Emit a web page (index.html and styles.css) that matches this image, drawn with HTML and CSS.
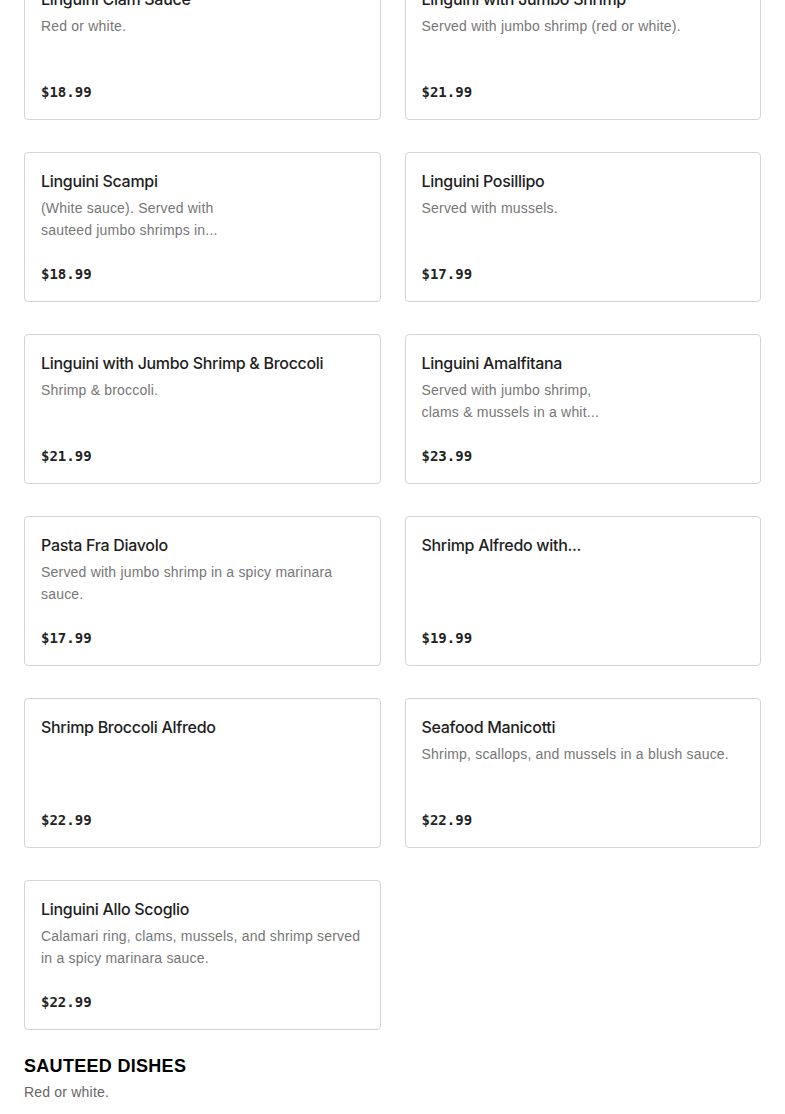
FILE: index.html
```html
<!DOCTYPE html>
<html lang="en">
<head>
<meta charset="utf-8">
<title>Menu</title>
<link rel="stylesheet" href="styles.css">
</head>
<body>
<main class="page">
  <section class="grid">
    <article class="card">
      <h3 class="title">Linguini Clam Sauce</h3>
      <p class="desc">Red or white.</p>
      <div class="price">$18.99</div>
    </article>
    <article class="card">
      <h3 class="title">Linguini with Jumbo Shrimp</h3>
      <p class="desc">Served with jumbo shrimp (red or white).</p>
      <div class="price">$21.99</div>
    </article>
    <article class="card">
      <h3 class="title">Linguini Scampi</h3>
      <p class="desc narrow">(White sauce). Served with sauteed jumbo shrimps in...</p>
      <div class="price">$18.99</div>
    </article>
    <article class="card">
      <h3 class="title">Linguini Posillipo</h3>
      <p class="desc">Served with mussels.</p>
      <div class="price">$17.99</div>
    </article>
    <article class="card">
      <h3 class="title">Linguini with Jumbo Shrimp &amp; Broccoli</h3>
      <p class="desc">Shrimp &amp; broccoli.</p>
      <div class="price">$21.99</div>
    </article>
    <article class="card">
      <h3 class="title">Linguini Amalfitana</h3>
      <p class="desc narrow">Served with jumbo shrimp, clams &amp; mussels in a whit...</p>
      <div class="price">$23.99</div>
    </article>
    <article class="card">
      <h3 class="title">Pasta Fra Diavolo</h3>
      <p class="desc">Served with jumbo shrimp in a spicy marinara sauce.</p>
      <div class="price">$17.99</div>
    </article>
    <article class="card">
      <h3 class="title">Shrimp Alfredo with...</h3>
      <p class="desc"></p>
      <div class="price">$19.99</div>
    </article>
    <article class="card">
      <h3 class="title">Shrimp Broccoli Alfredo</h3>
      <p class="desc"></p>
      <div class="price">$22.99</div>
    </article>
    <article class="card">
      <h3 class="title">Seafood Manicotti</h3>
      <p class="desc">Shrimp, scallops, and mussels in a blush sauce.</p>
      <div class="price">$22.99</div>
    </article>
    <article class="card">
      <h3 class="title">Linguini Allo Scoglio</h3>
      <p class="desc">Calamari ring, clams, mussels, and shrimp served in a spicy marinara sauce.</p>
      <div class="price">$22.99</div>
    </article>
  </section>
  <section class="section">
    <h2 class="section-title">SAUTEED DISHES</h2>
    <p class="section-desc">Red or white.</p>
  </section>
</main>
</body>
</html>
```

FILE: styles.css
```css
* { box-sizing: border-box; }
html, body { margin: 0; padding: 0; background: #fff; }
body { font-family: "Liberation Sans", Arial, sans-serif; color: #222; }
.page { padding: 0 24px; margin-top: -30px; }
.grid {
  display: grid;
  grid-template-columns: 1fr 1fr;
  column-gap: 24px;
  row-gap: 32px;
}
.card {
  height: 150px;
  border: 1px solid #d4d4d4;
  border-radius: 4px;
  padding: 16px 16px 17px;
  display: flex;
  flex-direction: column;
  background: #fff;
}
.title {
  margin: 0;
  font-size: 16px;
  line-height: 24px;
  font-weight: 500;
  color: #1e1e1e;
  font-family: "Inter", "Liberation Sans", sans-serif;
  letter-spacing: -0.3px;
}
.desc {
  margin: 4px 0 0;
  font-size: 14px;
  line-height: 22px;
  color: #767676;
  letter-spacing: 0.2px;
}
.desc.narrow { max-width: 200px; }
.price {
  margin-top: auto;
  font-family: "DejaVu Sans Mono", "Liberation Mono", monospace;
  font-weight: 700;
  font-size: 14px;
  line-height: 20px;
  color: #222;
}
.section { padding-top: 24px; }
.section-title {
  margin: 0;
  font-size: 18px;
  line-height: 24px;
  font-weight: 900;
  color: #000;
  letter-spacing: 0.3px;
}
.section-desc {
  margin: 3px 0 0;
  font-size: 14px;
  line-height: 22px;
  color: #666;
  letter-spacing: 0.2px;
}
```
